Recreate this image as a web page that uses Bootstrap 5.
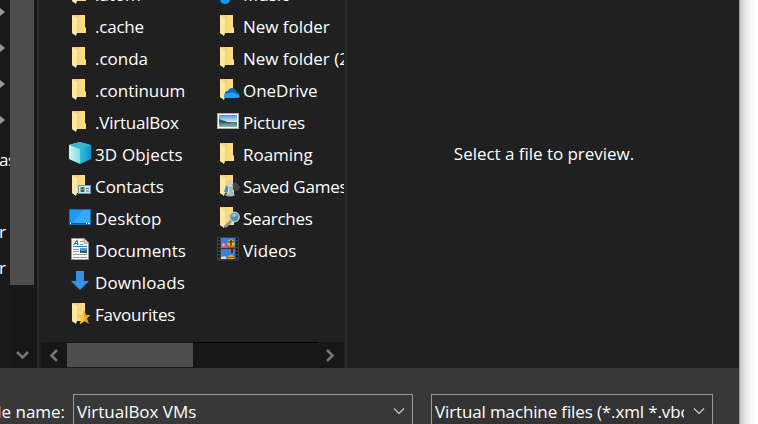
<!DOCTYPE html>
<html lang="en">
<head>
<meta charset="utf-8">
<meta name="viewport" content="width=device-width, initial-scale=1">
<title>Open file</title>
<link href="https://cdn.jsdelivr.net/npm/bootstrap@5.3.0/dist/css/bootstrap.min.css" rel="stylesheet">
<style>
body{font:17px/32px "Open Sans","Noto Sans",sans-serif;letter-spacing:-.03px;color:#fff;background:#fff;width:758px;height:424px}
svg{display:block;flex:none}
.dialog-win{width:739px}
.panes{height:368px;background:#202020}
.tree{width:10px;background:#191919}
.pins{padding-top:7px;gap:26px;height:142px}
.tree-label{height:36px;line-height:36px;margin-left:-1px;letter-spacing:-.5px}
.vscroll{width:27px;background:#171717}
.vthumb{width:24px;height:285px;background:#4d4d4d}
.divide{width:2px;background:#2b2b2b}
.files{width:306px}
.cols{height:342px;width:305px;padding-left:29px}
.file-col{margin-top:-21px;width:148px;flex:none}
.item{height:32px}
.item svg{margin-top:2px;margin-right:3px}
.fit-tight{letter-spacing:-.22px}
.fit-wide{letter-spacing:.15px}
.hscroll{height:26px;background:#171717;margin-left:2px;width:303px}
.hleft,.hright{width:26px}
.hthumb{width:126px;background:#4d4d4d;margin:1px 0}
.hline{width:125px;border-top:1px solid #000}
.preview-pane{padding-top:138px;padding-left:2px}
.fields{height:56px;background:#383838;padding-top:26px}
.field-label{width:73px;padding-right:8px;padding-top:2px}
.combo{border:1px solid #999;height:40px;background:#383838;line-height:33px;padding:0 7px 0 3px}
.combo svg{margin-top:12px}
.combo-name{width:340px}
.combo-type{width:282px;background:#333;margin-left:18px}
.combo-type .combo-text{width:249px;letter-spacing:-.13px}
.edge{width:19px;background:linear-gradient(90deg,#999 0 1px,#c6c6c6 1px,#e4e4e4 6px,#f7f7f7 12px,#fff 18px)}
</style>
<script src="https://cdn.jsdelivr.net/npm/bootstrap@5.3.0/dist/js/bootstrap.bundle.min.js"></script>
</head>
<body class="d-flex overflow-hidden text-nowrap">
<svg width="0" height="0" class="position-absolute">
<defs>
<linearGradient id="fg"><stop stop-color="#f0cd6d"/><stop offset="1" stop-color="#ffe28a"/></linearGradient>
<linearGradient id="cl"><stop stop-color="#d5f5f4"/><stop offset="1" stop-color="#7fdde3"/></linearGradient>
<linearGradient id="cr"><stop stop-color="#35bfd9"/><stop offset="1" stop-color="#0695d0"/></linearGradient>
<linearGradient id="sky" x2="0" y2="1"><stop stop-color="#4b91dc"/><stop offset=".55" stop-color="#d5ecfa"/><stop offset=".6" stop-color="#42775c"/><stop offset="1" stop-color="#84b8c8"/></linearGradient>
<g id="folder"><path d="M4 2H17V14L18 15V20H8V22L4 20Z" fill="url(#fg)"/><path d="M4 2L9 5V20L8 23L4 20Z" fill="#ffe8a6"/></g>
</defs></svg>

<div class="dialog-win flex-shrink-0 overflow-hidden">
 <div class="panes d-flex">
  <div class="tree overflow-hidden flex-shrink-0">
   <div class="pins d-flex flex-column">
    <svg width="6" height="10"><path d="M0 1L5 5L0 9Z" fill="#8f9ba3"/></svg>
    <svg width="6" height="10"><path d="M0 1L5 5L0 9Z" fill="#8f9ba3"/></svg>
    <svg width="6" height="10"><path d="M0 1L5 5L0 9Z" fill="#8f9ba3"/></svg>
    <svg width="6" height="10"><path d="M0 1L5 5L0 9Z" fill="#8f9ba3"/></svg>
   </div>
   <div class="tree-label">as</div><div class="tree-label"></div><div class="tree-label">r</div><div class="tree-label">r</div>
  </div>
  <div class="vscroll d-flex flex-column justify-content-between flex-shrink-0">
   <div class="vthumb"></div>
   <svg width="24" height="26"><path d="M7 10L12.5 15.5L18 10" fill="none" stroke="#777" stroke-width="2.6"/></svg>
  </div>
  <div class="divide flex-shrink-0"></div>
  <div class="files flex-shrink-0">
   <div class="cols d-flex overflow-hidden">
    <div class="file-col">
     <div class="item d-flex"><svg width="24" height="24"><use href="#folder"/></svg><span>.atom</span></div>
     <div class="item d-flex"><svg width="24" height="24"><use href="#folder"/></svg><span class="fit-tight">.cache</span></div>
     <div class="item d-flex"><svg width="24" height="24"><use href="#folder"/></svg><span>.conda</span></div>
     <div class="item d-flex"><svg width="24" height="24"><use href="#folder"/></svg><span>.continuum</span></div>
     <div class="item d-flex"><svg width="24" height="24"><use href="#folder"/></svg><span class="fit-tight">.VirtualBox</span></div>
     <div class="item d-flex"><svg width="24" height="24"><path d="M1 4L12 1V23L1 18Z" fill="url(#cl)"/><path d="M12 1L23 4V18L12 23Z" fill="url(#cr)"/><path d="M1 4L12 1L23 4L12 8Z" fill="#35b9cc"/></svg><span class="fit-wide">3D Objects</span></div>
     <div class="item d-flex"><svg width="24" height="24"><use href="#folder"/><rect x="10.5" y="12.5" width="12" height="8" fill="#c9e9fa" stroke="#5a9bc8"/><rect x="12" y="14" width="5" height="5" fill="#8eb39b"/><circle cx="14.5" cy="15.3" r="1.3" fill="#65503d"/><path d="M13 19V17H16V19Z" fill="#33694a"/><path d="M18 15.5H21M18 18H21" stroke="#3780b4"/></svg><span>Contacts</span></div>
     <div class="item d-flex"><svg width="24" height="24"><rect x="1.5" y="4.5" width="21" height="15" fill="#1b9cfb" stroke="#1272b8"/><path d="M15 5H22V18H5Z" fill="#35a9ff"/><path d="M1 18.5H23" stroke="#075b9d"/><path d="M2 18.5H3M18 18.5H19M20 18.5H22" stroke="#fff"/></svg><span class="fit-wide">Desktop</span></div>
     <div class="item d-flex"><svg width="24" height="24"><path d="M3.5 1.5H16L20.5 6V22.5H3.5Z" fill="#fafafa" stroke="#999"/><path d="M16 1.5V6H20.5" fill="#ddd" stroke="#999"/><path d="M5.5 8L9 3.5L10 8M7 6.5H10" fill="none" stroke="#167fc5" stroke-width="1.2"/><path d="M12 4.5H15M12 7.5H15" stroke="#4aa9df"/><path d="M5 9.5H19" stroke="#168bd2"/><path d="M5 12.5H11M5 14.5H11M5 17.5H19M5 20.5H19" stroke="#999"/><rect x="12" y="11" width="7" height="5" fill="#579bce"/><path d="M12 13L15 14L19 13V16H12Z" fill="#315e58"/></svg><span>Documents</span></div>
     <div class="item d-flex"><svg width="24" height="24"><path d="M8 2H16V12H21L12 21L3 12H8Z" fill="#3393e5"/></svg><span class="fit-wide">Downloads</span></div>
     <div class="item d-flex"><svg width="24" height="24"><use href="#folder"/><path d="M16 9L18 14L22.5 14L19 17.5L21 23L16.5 20L12 23L13.5 17.5L10 15L14.5 14Z" fill="#f7a51d"/><path d="M16 9L16.5 20L12 23L13.5 17.5L10 15L14.5 14Z" fill="#ffc443"/></svg><span class="fit-tight">Favourites</span></div>
    </div>
    <div class="file-col">
     <div class="item d-flex"><svg width="24" height="24"><ellipse cx="9" cy="18.7" rx="5" ry="4.3" fill="#0899f1"/></svg><span>Music</span></div>
     <div class="item d-flex"><svg width="24" height="24"><use href="#folder"/></svg><span>New folder</span></div>
     <div class="item d-flex"><svg width="24" height="24"><use href="#folder"/></svg><span>New folder (2)</span></div>
     <div class="item d-flex"><svg width="24" height="24"><use href="#folder"/><path d="M9 18Q8 14 12 14Q14 9 19 12Q20 14 21 15Q24 16 23 19L18 20H11Z" fill="#0865b9"/><path d="M8 20Q7 16 12 16L16 15L23 18Q25 21 21 21H10Q8 21 8 20Z" fill="#24a2e9"/></svg><span>OneDrive</span></div>
     <div class="item d-flex"><svg width="24" height="24"><rect x="1.5" y="4.5" width="21" height="15" fill="#fff" stroke="#aaa"/><rect x="3" y="6" width="18" height="12" fill="url(#sky)"/><path d="M3 10Q9 12 15 14H3Z" fill="#315f54"/></svg><span class="fit-tight">Pictures</span></div>
     <div class="item d-flex"><svg width="24" height="24"><use href="#folder"/></svg><span>Roaming</span></div>
     <div class="item d-flex"><svg width="24" height="24"><use href="#folder"/><path d="M16 10L20 9L24 14L22 18L17 17Z" fill="#41444a"/><path d="M8 19L10 13L14 11L12 20Z" fill="#448bc4"/><path d="M12 13H16L17 19L19 22Q14 25 9 22L12 19Z" fill="#a7b6bd"/><circle cx="14" cy="10" r="3" fill="#c7d3d7"/><path d="M11 13H17M13 15L12 21" stroke="#e4eeee"/></svg><span class="fit-tight">Saved Games</span></div>
     <div class="item d-flex"><svg width="24" height="24"><use href="#folder"/><path d="M15 16L10 21" stroke="#8e999e" stroke-width="3" stroke-linecap="round"/><circle cx="18.5" cy="12" r="4.7" fill="#5a8eab" stroke="#b5c8cf" stroke-width="1.4"/><path d="M15.5 11Q18 7 21 10L18 12Z" fill="#a2c7d9"/></svg><span class="fit-tight">Searches</span></div>
     <div class="item d-flex"><svg width="24" height="24"><path d="M1 0H23V23H1Z" fill="#414141"/><path d="M3 1V23M21 1V23" stroke="#111" stroke-width="2" stroke-dasharray="2 1.5"/><path d="M5 1H19V22H5Z" fill="#3f7ddb"/><path d="M5 7Q8 4 11 8L19 9V11H5Z" fill="#b9558f"/><circle cx="7.5" cy="8" r="1.4" fill="#f0bc9c"/><circle cx="15" cy="6" r="3.6" fill="#e8b913"/><path d="M12 4H18V5.5H12Z" fill="#c92c23"/><path d="M14.3 3H15.7V9H14.3Z" fill="#35312b"/><path d="M12 10H19V11H12Z" fill="#3b7a3a"/><path d="M13 12H19L16.5 16H15.5Z" fill="#e0542c"/><path d="M15 12H17V16H15Z" fill="#35312b"/><circle cx="15" cy="21" r="3" fill="#e8b913"/><path d="M5 20L9 19L11 22H5Z" fill="#d9dbe8"/><path d="M12 20H18V21H12Z" fill="#c92c23"/><path d="M1 22H23V24H1ZM5 11H19V12H5Z" fill="#333"/></svg><span class="fit-wide">Videos</span></div>
    </div>
   </div>
   <div class="hscroll d-flex">
    <svg class="hleft" height="26"><path d="M16 8L10.5 13.5L16 19" fill="none" stroke="#777" stroke-width="2.6"/></svg>
    <div class="hthumb"></div><div class="hline"></div>
    <svg class="hright" height="26"><path d="M9 8L14.5 13.5L9 19" fill="none" stroke="#777" stroke-width="2.6"/></svg>
   </div>
  </div>
  <div class="divide flex-shrink-0"></div>
  <div class="preview-pane flex-grow-1 text-center">Select a file to preview.</div>
 </div>
 <div class="fields d-flex">
  <div class="field-label d-flex justify-content-end overflow-hidden flex-shrink-0">File name:</div>
  <div class="combo combo-name d-flex justify-content-between flex-shrink-0"><span>VirtualBox VMs</span><svg width="12" height="8"><path d="M1 1.5L6 6.5L11 1.5" fill="none" stroke="#ccc" stroke-width="1.2"/></svg></div>
  <div class="combo combo-type d-flex justify-content-between flex-shrink-0"><span class="combo-text overflow-hidden">Virtual machine files (*.xml *.vbox)</span><svg width="12" height="8"><path d="M1 1.5L6 6.5L11 1.5" fill="none" stroke="#ccc" stroke-width="1.2"/></svg></div>
 </div>
</div>
<div class="edge flex-shrink-0"></div>
</body>
</html>
